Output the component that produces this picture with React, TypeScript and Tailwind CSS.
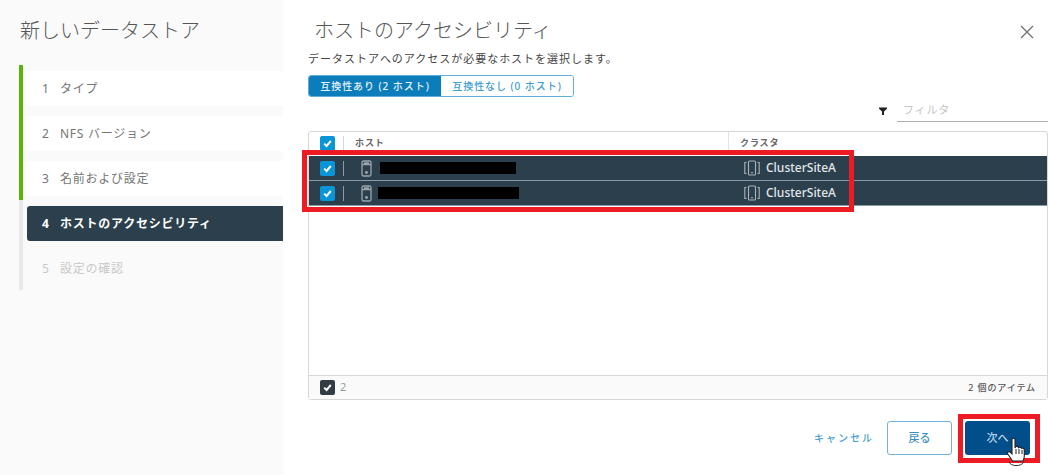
const font = { fontFamily: '"Noto Sans", "Noto Sans CJK JP", sans-serif' };

function Check({ dark = false }: { dark?: boolean }) {
  return (
    <span className={`flex h-[15px] w-[15px] shrink-0 items-center justify-center rounded-[2px] ${dark ? "bg-[#333c42]" : "bg-[#0a95d6]"}`}>
      <svg width="11" height="11" viewBox="0 0 11 11" fill="none" stroke="#fff" strokeWidth="2">
        <path d="M2.2 5.6 4.6 8 8.8 3" />
      </svg>
    </span>
  );
}

function HostIcon() {
  return (
    <svg width="11" height="17" viewBox="0 0 11 17" fill="none" stroke="#9aa6ad" strokeWidth="1.3" className="shrink-0">
      <rect x="1" y="1" width="9" height="15" rx="1.5" />
      <path d="M1 4.5h9M3 3h5" />
      <circle cx="5.5" cy="12.5" r="0.8" fill="#d5dadd" />
    </svg>
  );
}

function ClusterIcon() {
  return (
    <svg width="16" height="16" viewBox="0 0 16 16" fill="none" stroke="#a9b4ba" strokeWidth="1.1" className="shrink-0">
      <path d="M2.5 2.5H.8v11h1.7M13.5 2.5h1.7v11h-1.7" />
      <rect x="4.5" y="1" width="7" height="14" rx="1" />
      <path d="M7 12.7h2" />
    </svg>
  );
}

function Step({ n, label, state }: { n: number; label: string; state: "done" | "active" | "todo" }) {
  const cls =
    state === "active"
      ? "bg-[#2b3f4d] text-white font-bold rounded-l-[3px]"
      : state === "done"
        ? "bg-white text-[#757575]"
        : "text-[#c9c9c9]";
  return (
    <div className={`flex h-[35px] items-center pl-[15px] text-[12px] tracking-[0.75px] ${cls}`}>
      <span className="w-[18px] text-[12px]">{n}</span>
      <span>{label}</span>
    </div>
  );
}

function Row({ w, ml }: { w: number; ml: number }) {
  return (
    <div className="flex h-[25px] items-center border-b border-[#8c9aa3] bg-[#2b3f4d]">
      <div className="flex w-[29px] items-center justify-end pr-[3px]">
        <Check />
      </div>
      <div className="ml-[5px] h-[15px] w-px bg-[#8c9aa3]" />
      <div className="ml-[17px] flex w-[383px] items-center">
        <HostIcon />
        <div className="h-[12px] bg-black" style={{ width: w, marginLeft: ml }} />
      </div>
      <div className="flex items-center gap-[6px]">
        <ClusterIcon />
        <span className="text-[12px] font-medium text-[#e3e7ea]">ClusterSiteA</span>
      </div>
    </div>
  );
}

export default function App() {
  return (
    <div className="relative flex h-[475px] w-[1049px] overflow-hidden bg-white" style={font}>
      <aside className="h-full w-[283px] shrink-0 bg-[#fafafa] pt-[16px]">
        <h1 className="pl-[20px] text-[20px] leading-[30px] font-light tracking-[0px] text-[#565656]">新しいデータストア</h1>
        <div className="mt-[19px] ml-[19px] flex">
          <div className="flex w-[4px] flex-col bg-[#e8e8e8]" style={{ height: 225 }}>
            <div className="h-[135px] w-[4px] bg-[#5cb30a]" />
          </div>
          <div className="ml-[4px] flex flex-1 flex-col gap-[10px] pt-[6px]">
            <Step n={1} label="タイプ" state="done" />
            <Step n={2} label="NFS バージョン" state="done" />
            <Step n={3} label="名前および設定" state="done" />
            <Step n={4} label="ホストのアクセシビリティ" state="active" />
            <Step n={5} label="設定の確認" state="todo" />
          </div>
        </div>
      </aside>

      <main className="flex h-full flex-1 flex-col pt-[16px] pl-[25px]">
        <div className="flex items-start justify-between pr-[14px]">
          <h2 className="pl-[6px] text-[20px] leading-[30px] font-light tracking-[0px] text-[#565656]">ホストのアクセシビリティ</h2>
          <svg width="16" height="16" viewBox="0 0 16 16" stroke="#6f6f6f" strokeWidth="1.3" className="mt-[8px]">
            <path d="M2 2l12 12M14 2 2 14" />
          </svg>
        </div>
        <p className="mt-[4px] text-[11px] leading-[18px] tracking-[0.98px] text-[#444]">データストアへのアクセスが必要なホストを選択します。</p>

        <div className="mt-[7px] flex h-[22px] w-[266px] overflow-hidden rounded-[3px] border border-[#5fadd8] text-[10px] font-medium tracking-[0.95px]">
          <div className="flex w-[132px] items-center justify-center bg-[#0b7dbb] text-[#e6f2f9]">互換性あり (2 ホスト)</div>
          <div className="flex flex-1 items-center justify-center bg-white text-[#3e9ccf]">互換性なし (0 ホスト)</div>
        </div>

        <div className="mt-[3px] flex h-[22px] items-center justify-end pr-[1px]">
          <svg width="8" height="8" viewBox="0 0 8 8" fill="#222">
            <path d="M0 .5h8v1.3L5 4.6V8H3V4.6L0 1.8z" />
          </svg>
          <div className="ml-[10px] flex h-[22px] w-[151px] items-center border-b border-[#b0b0b0] pl-[6px] text-[11px] tracking-[0.8px] text-[#c4c4c4]">フィルタ</div>
        </div>

        <div className="mt-[9px] flex h-[269px] w-[740px] flex-col rounded-[3px] border border-[#d7d7d7]">
          <div className="flex h-[24px] shrink-0 items-center pb-[2px] text-[9px] leading-[20px] font-bold tracking-[0.9px] text-[#666]">
            <div className="flex w-[29px] justify-end pr-[3px]">
              <Check />
            </div>
            <div className="ml-[5px] h-[15px] w-px bg-[#d7d7d7]" />
            <div className="w-[384px] pl-[11px]">ホスト</div>
            <div className="h-[22px] w-px bg-[#e4e4e4]" />
            <div className="pl-[11px]">クラスタ</div>
          </div>
          <Row w={136} ml={8} />
          <Row w={141} ml={6} />
          <div className="flex-1" />
          <div className="flex h-[24px] shrink-0 items-center justify-between border-t border-[#d7d7d7] bg-[#fafafa] pr-[11px] pl-[11px]">
            <div className="flex items-center gap-[5px]">
              <Check dark />
              <span className="text-[11px] text-[#9a9a9a]">2</span>
            </div>
            <span className="text-[9px] font-medium tracking-[0.9px] text-[#555]">2 個のアイテム</span>
          </div>
        </div>

        <div className="mt-[21px] flex items-center justify-end pr-[19px]">
          <span className="text-[10px] font-medium tracking-[2px] text-[#4c9fce]">キャンセル</span>
          <button className="ml-[13px] flex h-[34px] w-[65px] items-center justify-center rounded-[3px] border border-[#72b3d8] bg-white text-[11px] font-medium text-[#3e8fbe]">戻る</button>
          <button className="ml-[13px] flex h-[34px] w-[65px] items-center justify-center rounded-[3px] bg-[#004f8b] text-[11px] font-medium text-[#b9d4e6]">次へ</button>
        </div>
      </main>

      {/* annotation boxes over the screenshot */}
      <div className="pointer-events-none absolute top-[150px] left-[302px] h-[62px] w-[552px] border-[5px] border-[#ed1c24]" />
      <div className="pointer-events-none absolute top-[414px] left-[958px] h-[49px] w-[82px] border-[5px] border-[#ed1c24]" />

      {/* hand cursor over the next button */}
      <svg width="24" height="32" viewBox="0 0 24 32" className="pointer-events-none absolute top-[437px] left-[1006px]">
        <path
          d="M6 2.5c0-1.6 3-1.6 3 0V11l.5-1.2c1.4-.8 2.8-.3 3 .8.9-.8 2.6-.6 3 .8 1-.7 2.8-.2 2.8 1.4V19c0 2.5-.8 3.5-1.5 5H6.5L1.8 17c-1-1.7 1-3.2 2.4-1.8L6 17z"
          fill="#fff"
          stroke="#222"
          strokeWidth="1.1"
        />
        <path d="M10 12v5M13 12v5M16 13v4" stroke="#222" strokeWidth="1" />
        <path d="M3 25c1.5 4.5 12 5 15 0" fill="none" stroke="#333" strokeWidth="1" />
      </svg>
    </div>
  );
}
